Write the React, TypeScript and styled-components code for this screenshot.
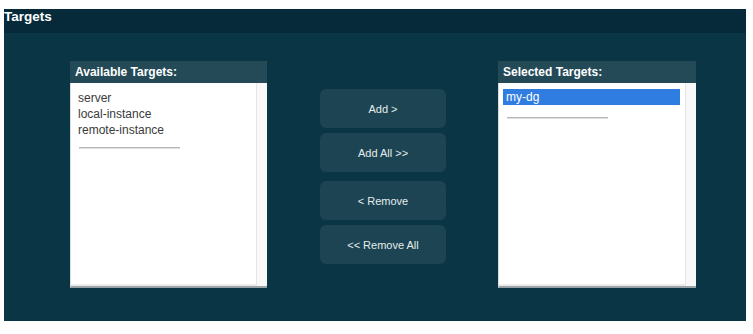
import React from 'react'
import styled, { createGlobalStyle } from 'styled-components'

const Global = createGlobalStyle`
  html, body { margin: 0; padding: 0; background: #fff; }
  body { font-family: "Liberation Sans", Arial, sans-serif; }
`

const Page = styled.div`
  padding: 9px 7px 0 4px;
`

const Window = styled.div`
  background: #0a3545;
  height: 312px;
  display: flex;
  flex-direction: column;
`

const TitleBar = styled.div`
  background: #062a3a;
  height: 24px;
  color: #fff;
  font-weight: bold;
  font-size: 13.5px;
  line-height: 14px;
  padding-top: 1px;
  box-sizing: border-box;
`

const Body = styled.div`
  display: flex;
  align-items: flex-start;
  padding: 28px 0 0 66px;
`

const Panel = styled.div<{ $width: number }>`
  width: ${p => p.$width}px;
  display: flex;
  flex-direction: column;
`

const PanelHeader = styled.div`
  background: #244a58;
  height: 22px;
  color: #fff;
  font-weight: bold;
  font-size: 12px;
  line-height: 22px;
  padding-left: 5px;
`

const ListBox = styled.div`
  height: 205px;
  background: #fff;
  display: flex;
  border-left: 1px solid #d8dcde;
  border-bottom: 2px solid #9aa4a8;
  box-sizing: border-box;
`

const Items = styled.div`
  flex: 1;
  padding: 7px 4px 0 7px;
  border-right: 1px solid #e6e6e6;
  border-bottom: 2px solid #ececec;
`

const Item = styled.div<{ $selected?: boolean }>`
  font-size: 12px;
  line-height: 16px;
  height: 16px;
  color: ${p => (p.$selected ? '#fff' : '#3a3a3a')};
  background: ${p => (p.$selected ? '#2f7de1' : 'transparent')};
  padding-left: ${p => (p.$selected ? '3px' : '0')};
  margin: ${p => (p.$selected ? '-1px 1px 0 -3px' : '0')};
`

const Separator = styled.div<{ $top: number }>`
  width: 101px;
  height: 1px;
  background: #b8b8b8;
  border-bottom: 1px solid #dedede;
  margin-top: ${p => p.$top}px;
  margin-left: 1px;
`

const Scroll = styled.div`
  width: 10px;
  background: #f8f8f8;
`

const Buttons = styled.div`
  width: 126px;
  margin: 28px 52px 0 53px;
  display: flex;
  flex-direction: column;
`

const Group = styled.div`
  display: flex;
  flex-direction: column;
  gap: 5px;
  & + & { margin-top: 9px; }
`

const Btn = styled.button`
  height: 39px;
  border: none;
  border-radius: 6px;
  background: #1c4452;
  color: #e4ecee;
  font-family: "Liberation Sans", Arial, sans-serif;
  font-size: 11px;
  padding: 0;
  cursor: pointer;
`

export default function App() {
  return (
    <Page>
      <Global />
      <Window>
        <TitleBar>Targets</TitleBar>
        <Body>
          <Panel $width={197}>
            <PanelHeader>Available Targets:</PanelHeader>
            <ListBox>
              <Items>
                <Item>server</Item>
                <Item>local-instance</Item>
                <Item>remote-instance</Item>
                <Separator $top={9} />
              </Items>
              <Scroll />
            </ListBox>
          </Panel>
          <Buttons>
            <Group>
              <Btn>Add &gt;</Btn>
              <Btn>Add All &gt;&gt;</Btn>
            </Group>
            <Group>
              <Btn>&lt; Remove</Btn>
              <Btn>&lt;&lt; Remove All</Btn>
            </Group>
          </Buttons>
          <Panel $width={198}>
            <PanelHeader>Selected Targets:</PanelHeader>
            <ListBox>
              <Items>
                <Item $selected>my-dg</Item>
                <Separator $top={12} />
              </Items>
              <Scroll />
            </ListBox>
          </Panel>
        </Body>
      </Window>
    </Page>
  )
}
